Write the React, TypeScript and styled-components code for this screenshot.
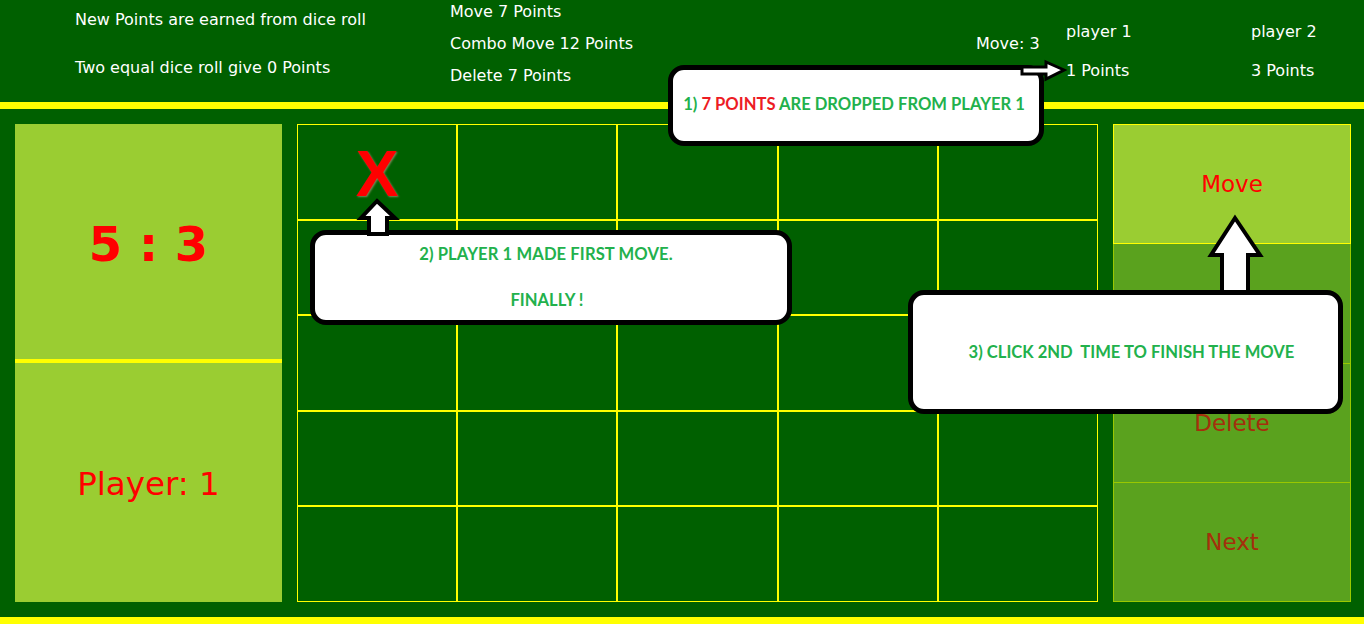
import React from "react";
import styled, { createGlobalStyle } from "styled-components";

const GREEN = "#006000";
const YELLOW = "#ffff00";
const LIGHT = "#9acd32";
const MID = "#5aa21e";
const CALLOUT_GREEN = "#22b14c";
const CALLOUT_RED = "#ed1c24";

const Global = createGlobalStyle`
  html, body { margin: 0; padding: 0; background: ${GREEN}; }
  body { font-family: "DejaVu Sans", sans-serif; }
`;

const Page = styled.div`
  position: relative;
  width: 1364px;
  height: 624px;
  background: ${GREEN};
  overflow: hidden;
`;

const Header = styled.header`
  height: 102px;
  border-bottom: 7px solid ${YELLOW};
  display: flex;
  color: #ffffff;
  font-size: 16px;
`;

const HeaderCol = styled.div<{ $left: number; $top: number; $gap: number; $width?: number }>`
  margin-left: ${(p) => p.$left}px;
  padding-top: ${(p) => p.$top}px;
  width: ${(p) => (p.$width ? `${p.$width}px` : "auto")};
  display: flex;
  flex-direction: column;
  gap: ${(p) => p.$gap}px;
  line-height: 20px;
  white-space: nowrap;
`;

const Main = styled.main`
  height: 478px;
  padding: 15px 13px 15px 15px;
  border-bottom: 7px solid ${YELLOW};
  display: flex;
  gap: 15px;
`;

const ScorePanel = styled.section`
  width: 267px;
  display: flex;
  flex-direction: column;
  background: ${LIGHT};
  color: #ff0000;
`;

const ScoreTop = styled.div`
  height: 239px;
  border-bottom: 4px solid ${YELLOW};
  display: flex;
  align-items: center;
  justify-content: center;
  font-size: 48px;
  font-weight: bold;
  padding-top: 4px;
  box-sizing: border-box;
`;

const ScoreBottom = styled.div`
  flex: 1;
  display: flex;
  align-items: center;
  justify-content: center;
  font-size: 32.5px;
  padding-top: 2px;
`;

const Board = styled.section`
  width: 801px;
  box-sizing: border-box;
  border: 1px solid ${YELLOW};
  background: ${YELLOW};
  display: grid;
  grid-template-columns: repeat(5, 1fr);
  grid-template-rows: repeat(5, 1fr);
  gap: 2px;
`;

const Cell = styled.div`
  background: ${GREEN};
  display: flex;
  align-items: center;
  justify-content: center;
`;

const Mark = styled.span`
  font-family: "Liberation Sans", Arial, sans-serif;
  font-weight: bold;
  font-size: 64px;
  line-height: 1;
  color: #ff0000;
  text-shadow: 1px 1px 2px rgba(140, 140, 100, 0.9);
  margin-top: 4px;
`;

const Actions = styled.section`
  width: 238px;
  display: flex;
  flex-direction: column;
`;

const ActionButton = styled.div<{ $active?: boolean }>`
  flex: 1;
  box-sizing: border-box;
  background: ${(p) => (p.$active ? LIGHT : MID)};
  border: 1px solid ${(p) => (p.$active ? YELLOW : "#99c800")};
  border-top-width: ${(p) => (p.$active ? 1 : 0)}px;
  color: ${(p) => (p.$active ? "#ff0000" : "#a52f0c")};
  font-size: 23px;
  display: flex;
  align-items: center;
  justify-content: center;
`;

const Callout = styled.div<{ $x: number; $y: number; $w: number; $h: number }>`
  position: absolute;
  left: ${(p) => p.$x}px;
  top: ${(p) => p.$y}px;
  width: ${(p) => p.$w}px;
  height: ${(p) => p.$h}px;
  box-sizing: border-box;
  background: #ffffff;
  border: 5px solid #000000;
  border-radius: 16px;
  display: flex;
  flex-direction: column;
  align-items: center;
  justify-content: center;
  font-family: Lato, "Open Sans", sans-serif;
  font-weight: bold;
  font-size: 16.6px;
  color: ${CALLOUT_GREEN};
  white-space: pre;
`;

const CalloutLine = styled.div<{ $mt?: number; $dx?: number; $ls?: number }>`
  margin-top: ${(p) => p.$mt ?? 0}px;
  letter-spacing: ${(p) => p.$ls ?? 0}px;
  transform: translateX(${(p) => p.$dx ?? 0}px);
`;

const Red = styled.span`
  color: ${CALLOUT_RED};
`;

const ArrowSvg = styled.svg<{ $x: number; $y: number }>`
  position: absolute;
  left: ${(p) => p.$x}px;
  top: ${(p) => p.$y}px;
  overflow: visible;
`;

const cells = Array.from({ length: 25 }, (_, i) => i);

export default function App() {
  return (
    <>
      <Global />
      <Page>
        <Header>
          <HeaderCol $left={75} $top={10} $gap={28} $width={375}>
            <div>New Points are earned from dice roll</div>
            <div>Two equal dice roll give 0 Points</div>
          </HeaderCol>
          <HeaderCol $left={0} $top={2} $gap={12} $width={526}>
            <div>Move 7 Points</div>
            <div>Combo Move 12 Points</div>
            <div>Delete 7 Points</div>
          </HeaderCol>
          <HeaderCol $left={0} $top={34} $gap={0} $width={90}>
            <div>Move: 3</div>
          </HeaderCol>
          <HeaderCol $left={0} $top={22} $gap={19} $width={185}>
            <div>player 1</div>
            <div>1 Points</div>
          </HeaderCol>
          <HeaderCol $left={0} $top={22} $gap={19}>
            <div>player 2</div>
            <div>3 Points</div>
          </HeaderCol>
        </Header>
        <Main>
          <ScorePanel>
            <ScoreTop>5 : 3</ScoreTop>
            <ScoreBottom>Player: 1</ScoreBottom>
          </ScorePanel>
          <Board>
            {cells.map((i) => (
              <Cell key={i}>{i === 0 ? <Mark>X</Mark> : null}</Cell>
            ))}
          </Board>
          <Actions>
            <ActionButton $active>Move</ActionButton>
            <ActionButton>Combo</ActionButton>
            <ActionButton>Delete</ActionButton>
            <ActionButton>Next</ActionButton>
          </Actions>
        </Main>

        <Callout $x={668} $y={65} $w={376} $h={81}>
          <CalloutLine $mt={-4} $dx={-2}>
            1) <Red>7 POINTS</Red> ARE DROPPED FROM PLAYER 1
          </CalloutLine>
        </Callout>
        <ArrowSvg $x={1018} $y={58} width="50" height="26" viewBox="0 0 50 26">
          <path
            d="M4 9 H28 V4 L46 12 L28 21 V16 H4 Z"
            fill="#ffffff"
            stroke="#000000"
            strokeWidth="3"
            strokeLinejoin="miter"
          />
        </ArrowSvg>

        <Callout $x={310} $y={230} $w={482} $h={95}>
          <CalloutLine $mt={-2} $dx={-5} $ls={0.1}>2) PLAYER 1 MADE FIRST MOVE.</CalloutLine>
          <CalloutLine $mt={26} $dx={-4}>FINALLY !</CalloutLine>
        </Callout>
        <ArrowSvg $x={356} $y={198} width="44" height="38" viewBox="0 0 44 38">
          <path
            d="M21 3 L39 20 H31 V36 H13 V20 H5 Z"
            fill="#ffffff"
            stroke="#000000"
            strokeWidth="4"
            strokeLinejoin="miter"
          />
        </ArrowSvg>

        <Callout $x={908} $y={290} $w={435} $h={124}>
          <CalloutLine $dx={6}>3) CLICK 2ND  TIME TO FINISH THE MOVE</CalloutLine>
        </Callout>
        <ArrowSvg $x={1207} $y={214} width="58" height="80" viewBox="0 0 58 80">
          <path
            d="M28 4 L53 41 H41 V78 H15 V41 H4 Z"
            fill="#ffffff"
            stroke="#000000"
            strokeWidth="4"
            strokeLinejoin="miter"
          />
        </ArrowSvg>
      </Page>
    </>
  );
}
